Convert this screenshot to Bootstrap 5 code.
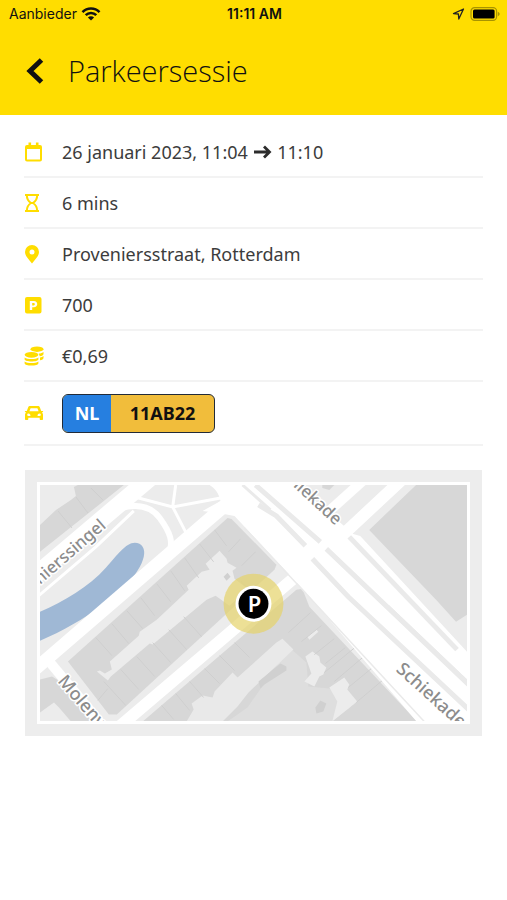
<!DOCTYPE html>
<html lang="nl">
<head>
<meta charset="utf-8">
<meta name="viewport" content="width=device-width, initial-scale=1">
<title>Parkeersessie</title>
<link href="https://cdn.jsdelivr.net/npm/bootstrap@5.3.0/dist/css/bootstrap.min.css" rel="stylesheet">
<style>
body { font-family: "Noto Sans", "Open Sans", sans-serif; color: #3c3c3c; background: #fff; }
.app-head { background: #fd0; color: #111; height: 115px; }
.status { font: 14px/28px Inter, sans-serif; padding: 0 7px 0 9px; }
.status > * { flex: 1 1 0; }
.status time { font-weight: 600; text-align: center; }
.title-row { padding: 21px 24px 0 24px; gap: 22px; }
.title-row h1 { font: 300 29px/44px "Open Sans", sans-serif; }
.back { line-height: 0; color: #111; }
.session { padding: 12px 24px 0; }
.session li { min-height: 51px; gap: 18px; font-size: 18px; line-height: 24px; border-bottom: 2px solid #f3f3f3; }
.session li.plate-row { min-height: 64px; }
.session li > svg { width: 20px; height: 20px; color: #fd0; flex: none; }
.session .to { margin: -4px 1px 0; }
.plate { border: 1px solid #222b38; border-radius: 6px; background: #f1bd3b; font: 700 18px/37px "Noto Sans", sans-serif; color: #111; overflow: hidden; }
.plate .land { background: #267fe0; color: #fff; width: 48px; text-align: center; }
.plate .num { width: 103px; text-align: center; }
.map-frame { margin: 24px 25px 0; padding: 12px; background: #ededed; }
.map-inner { border: 3px solid #fff; }
.map-inner svg { display: block; width: 100%; height: auto; }
.street { font: 500 17px "Noto Sans", sans-serif; fill: #8c8c8c; stroke: #fff; stroke-width: 3px; paint-order: stroke; stroke-linejoin: round; }
.street.wide { font-size: 18px; }
</style>
<script src="https://cdn.jsdelivr.net/npm/bootstrap@5.3.0/dist/js/bootstrap.bundle.min.js"></script>
</head>
<body>
<header class="app-head">
  <div class="status d-flex align-items-center">
    <div class="d-flex align-items-center gap-1"><span>Aanbieder</span>
      <svg width="20" height="14" viewBox="0 0 20 14" fill="none" stroke="#111" stroke-width="2.6"><path d="M1.500 5.100a12 12 0 0 1 17 0M4.700 8.200a7.500 7.500 0 0 1 10.600 0"/><path d="M10 13.600 6.900 10.500a4.400 4.400 0 0 1 6.200 0z" fill="#111" stroke="none"/></svg>
    </div>
    <time>11:11 AM</time>
    <div class="d-flex align-items-center justify-content-end gap-1">
      <svg width="13" height="12" viewBox="0 0 12 12" fill="none" stroke="#222" stroke-width="1.3" stroke-linejoin="round"><path d="M11 1 1 5.600l4.900.4.400 5z"/></svg>
      <svg width="31" height="14" viewBox="0 0 31 14"><rect x="2" y=".7" width="25.600" height="12.600" rx="3.600" fill="none" stroke="#a89300" stroke-width="1.200"/><rect x="4" y="2.500" width="21.600" height="9" rx="1.500" fill="#000"/><path d="M28.800 4.800c2.400.8 2.400 3.600 0 4.400z" fill="#a89300"/></svg>
    </div>
  </div>
  <div class="title-row d-flex align-items-center">
    <button class="back btn p-0 border-0" type="button" aria-label="Terug"><svg width="22" height="28" viewBox="0 0 22 28" fill="none" stroke="#111" stroke-width="5"><path d="M17.500 3 6 14l11.500 11"/></svg></button>
    <h1 class="m-0">Parkeersessie</h1>
  </div>
</header>
<main>
  <ul class="session list-unstyled m-0">
    <li class="d-flex align-items-center">
      <svg viewBox="0 0 20 20" fill="none" stroke="currentColor" stroke-width="2"><rect x="2" y="4" width="15" height="14.500" rx="1"/><path d="M2 5.500h15" stroke-width="3"/><path d="M5.800.5v4M13.200.5v4" stroke-width="2.600"/></svg>
      <span>26 januari 2023, 11:04 <svg class="to" width="18" height="14" viewBox="0 0 18 14" fill="none" stroke="#2c2c2c" stroke-width="2.800" role="img" aria-label="tot"><path d="M0 7h15M10 1.500 15.500 7 10 12.500"/></svg> 11:10</span>
    </li>
    <li class="d-flex align-items-center">
      <svg viewBox="0 0 20 20" fill="none" stroke="currentColor" stroke-width="2"><path d="M1 2h14M1 18h14M2.800 2c0 4 1.800 6.500 4.200 8-2.400 1.500-4.200 4-4.200 8M13.200 2c0 4-1.800 6.500-4.200 8 2.400 1.500 4.200 4 4.200 8"/><path d="M7 10h2"/></svg>
      <span>6 mins</span>
    </li>
    <li class="d-flex align-items-center">
      <svg viewBox="0 0 20 20" fill="currentColor" fill-rule="evenodd"><path d="M8 1a7 7 0 0 1 7 7c0 3.500-2.500 6-7 11.500C3.500 14 1 11.500 1 8a7 7 0 0 1 7-7zm0 4.500a2.500 2.500 0 1 0 0 5 2.500 2.500 0 0 0 0-5z"/></svg>
      <span>Proveniersstraat, Rotterdam</span>
    </li>
    <li class="d-flex align-items-center">
      <svg viewBox="0 0 20 20" fill="currentColor" fill-rule="evenodd"><path d="M3 2h12.500a2 2 0 0 1 2 2v12.500a2 2 0 0 1-2 2H3a2 2 0 0 1-2-2V4a2 2 0 0 1 2-2zm2.800 4v9h2.400v-2.700h1.600c4.600 0 4.600-6.300 0-6.300zm2.400 2h1.400c1.700 0 1.700 2.400 0 2.400H8.200z"/></svg>
      <span>700</span>
    </li>
    <li class="d-flex align-items-center">
      <svg viewBox="0 0 20 20" fill="currentColor"><ellipse cx="13" cy="3.200" rx="6.500" ry="2.700"/><path d="M14.700 7.600c2-.2 4-.8 4.800-1.700v2c0 1.200-1.500 2-3.700 2.300zM16 11.500c1.500-.3 2.700-.8 3.500-1.500v1.900c0 1.200-1.400 2-3.500 2.300z"/><ellipse cx="7.500" cy="8.800" rx="6.900" ry="2.900"/><path d="M.6 11.400c2.700 2.100 11.100 2.100 13.800 0v1.800c0 3-13.800 3-13.800 0zM.6 15.400c2.700 2.100 11.100 2.100 13.800 0v1.800c0 3.200-13.800 3.200-13.800 0z"/></svg>
      <span>€0,69</span>
    </li>
    <li class="plate-row d-flex align-items-center">
      <svg viewBox="0 0 20 20" fill="currentColor" fill-rule="evenodd"><path d="M6.200 3h7.600c1 0 1.700.5 2.100 1.400L17.200 8h1.300c.9 0 .9 1.200 0 1.300l-.6.200c.7.500 1.100 1.200 1.100 2V16c0 .6-.4 1-1 1h-1.300c-.6 0-1-.4-1-1v-1.300H4.300V16c0 .6-.4 1-1 1H2c-.6 0-1-.4-1-1v-4.500c0-.8.400-1.500 1.100-2l-.6-.2c-.9-.1-.9-1.300 0-1.300h1.300l1.300-3.600C4.500 3.500 5.200 3 6.200 3zm.4 2.300L5.400 8.300h9.200l-1.200-3zM4.500 10.500a1.300 1.300 0 1 0 0 2.600h1.800c.6-1.200-.6-2.600-1.800-2.600zm11 0c-1.200 0-2.400 1.400-1.800 2.600h1.800a1.300 1.300 0 1 0 0-2.600z"/></svg>
      <div class="plate d-flex"><span class="land">NL</span><span class="num">11AB22</span></div>
    </li>
  </ul>
  <section class="map-frame" aria-label="Kaart">
    <div class="map-inner">
      <svg viewBox="40 485 428 237">
        <rect x="40" y="485" width="428" height="237" fill="#ececec"/>
        <!-- buildings -->
        <g fill="#d7d7d7">
          <path d="M40 525 56 510l15-10 5-4-2-9 4-2h46L40 552z"/>
          <path d="M417 485h51v130l-11 7-20-22-67-70z"/>
          <path d="M323 485h12l-5 5-7-2z"/>
          <path d="m228 518 4 1 45 46-2 5-158 145h-8L68 662z"/>
          <path d="M143 722 297 590l6-1 7 18 108 115z"/>
          <path d="m40 680 12-3 5 3 35 42H40z"/>
        </g>
        <path d="m290 648 17 15 2 24 21 2 22 18-20 15H228l20-14z" fill="#dedede"/>
        <g fill="#ececec">
          <path d="m97 672 11 9 3-4 39-33 3 1 54-45 9-4 14 10 18-17-13-10-2-8 4-3-9-5-1-4-7-8-14 13 4 6-8 2-15 14 2 4-32 30-17 12-1 4-29 26 2 8-7 4-5-3z"/>
          <path d="m187 722 7-12-2-6 11-8 10 2 2-6 18-19 5 5 39-35 6-4 11 11-45 43-11 14-15 15z" fill="#e9e9e9"/>
          <path d="m306 657 7-5 7 5 1 6 6 5-3 7-4 2-5 10-10-5 7-8z"/>
          <path d="m330 688 15-10 5 7-2 5 10 12-25 20 5-20z"/>
          <path d="m40 713 14-10 5 5 12 14H40z"/>
          <path d="m308 637 9-7 2 2-9 8z"/>
        </g>
        <path d="m259 682 22-18 6 3v4l-22 14-4 4zM316 708l5-7 6 3-3 8-7 2zM224 577l4-4 3 4-4 4z" fill="#d0d0d0"/>
        <g stroke="#cfcfcf" fill="none">
          <path d="m58 511 14 17M76 497l12 16M91 488l12 12M200 544l14 18M185 558l14 20M171 571l14 20M157 584l14 18M141 598l14 18M127 611l16 18M112 624l17 20M96 638l16 18M215 530l12 16M241 581l14 15M184 617l18 20M169 630l18 20M153 643l18 20M137 657l18 20M121 670l18 20M104 682l22 24M108 689l-10 12M162 706l12 14M176 694l14 17M190 682l14 16M205 669l15 15M220 656l15 15M235 643l15 15"/>
          <path d="m302 642 20-16M289 633l22-20M315 655l20-16M326 664l20-16M325 673l33-27M335 682l33-28M349 688l28-23M357 703l32-27M241 539l-12 13M256 552l-14 14"/>
        </g>
        <!-- water -->
        <path d="M40 612c24-10 49-25 66-44 11-12 20-25 29-25 7 0 11 6 9 14-4 18-25 36-41 48-19 14-41 27-63 36z" fill="#9fb8d5"/>
        <!-- streets -->
        <g stroke="#fff" fill="none">
          <path d="M154 475 30 580" stroke-width="17"/>
          <path d="M134 511 96 547 34 600" stroke-width="3"/>
          <path d="M108 516c16-13 40-14 52 2 11 15 14 24 9 38" stroke-width="6"/>
          <path d="m135 497 38 10 48-9M176 485l-3 22 15 29" stroke-width="3"/>
          <path d="M30 674 240 493" stroke-width="13"/>
          <path d="M46 658 106 730" stroke-width="10"/>
          <path d="m412 471-90 84-208 177" stroke-width="12"/>
          <path d="m370 475-40 36" stroke-width="10"/>
        </g>
        <path d="M212 480h80l62 54 7 2 117 127v76h-46L306 592l-71-76-16-3-16-2 18-10c-2-8-5-12-11-16z" fill="#fff"/>
        <g stroke="#eaeaea" fill="none">
          <path d="m256 485 65 57M327 549l150 143" stroke-width="5"/>
          <path d="m259 505 18 11 29 30M313 559l36 38 128 120" stroke-width="5"/>
          <path d="m245 528 59 63 122 132" stroke-width="1.500"/>
          <path d="m350 537 108 113" stroke-width="5"/>
          <path d="m243 485 28 25" stroke-width="3"/>
          <path d="m389 606 80 76" stroke-width="2"/>
        </g>
        <!-- street names -->
        <text class="street" text-anchor="end" transform="translate(107 527) rotate(-41)">nierssingel</text>
        <text class="street" text-anchor="end" transform="translate(336 526) rotate(43)">hiekade</text>
        <text class="street wide" transform="translate(57 682) rotate(49)">Molenw</text>
        <text class="street wide" transform="translate(396 671) rotate(42)">Schiekade</text>
        <!-- parking marker -->
        <circle cx="254" cy="604" r="30" fill="#e6d36a" fill-opacity=".7"/>
        <circle cx="254" cy="604" r="18" fill="#fff"/>
        <circle cx="254" cy="604" r="15" fill="#000"/>
        <text x="255" y="612" text-anchor="middle" font-family="Noto Sans, sans-serif" font-weight="600" font-size="22" fill="#fff">P</text>
      </svg>
    </div>
  </section>
</main>
</body>
</html>
